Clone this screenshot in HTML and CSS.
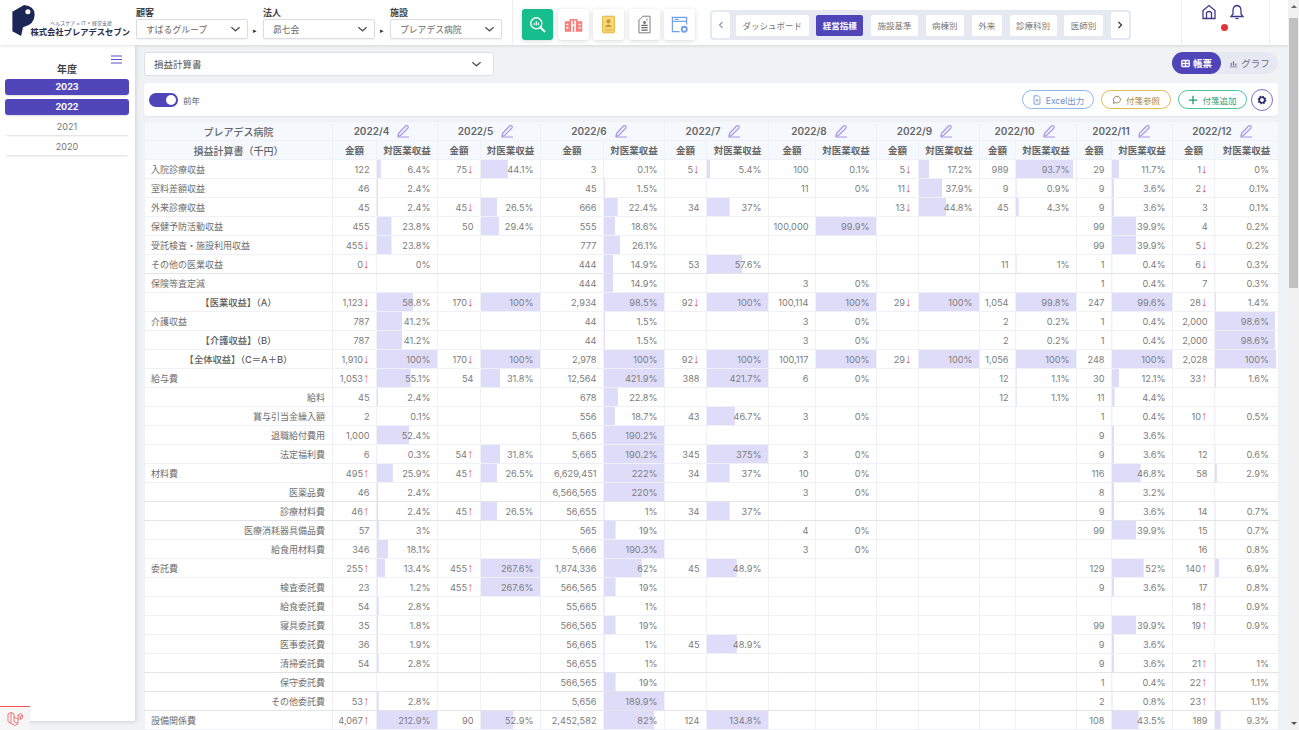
FILE: index.html
```html
<!DOCTYPE html>
<html lang="ja">
<head>
<meta charset="utf-8">
<title>損益計算書</title>
<link rel="stylesheet" href="styles.css">
</head>
<body>
<div class="page">
<div class="app">
<header class="topbar">
  <div class="brand">
    <svg class="brand-mark" viewBox="0 0 24 32"><path d="M0 7 L12 0 Q23 1 23 10 Q23 20 11 23 L9 32 L0 27 Z" fill="#1d2755"/><circle cx="16" cy="7" r="2.6" fill="#fff"/></svg>
    <div class="brand-text"><span class="brand-sub">ヘルスケア × IT × 経営支援</span><span class="brand-name">株式会社プレアデスセブン</span></div>
  </div>
  <div class="field"><span class="field-label">顧客</span><div class="select"><span>すばるグループ</span><svg class="chev" viewBox="0 0 12 8"><path d="M1.5 2 L6 6 L10.5 2"/></svg></div></div>
  <span class="sep">▸</span>
  <div class="field"><span class="field-label">法人</span><div class="select"><span>昴七会</span><svg class="chev" viewBox="0 0 12 8"><path d="M1.5 2 L6 6 L10.5 2"/></svg></div></div>
  <span class="sep">▸</span>
  <div class="field"><span class="field-label">施設</span><div class="select"><span>プレアデス病院</span><svg class="chev" viewBox="0 0 12 8"><path d="M1.5 2 L6 6 L10.5 2"/></svg></div></div>
  <div class="rule"></div>
  <nav class="appicons">
    <a class="appicon on"><svg viewBox="0 0 24 24" fill="none" stroke="#fff" stroke-width="1.8"><circle cx="10.5" cy="10.5" r="7"/><path d="M15.5 15.5 L21.5 21.5" stroke-width="2.4"/><path d="M8 13 V10 M10.5 13 V7.5 M13 13 V9.5" stroke-width="1.4"/></svg></a>
    <a class="appicon"><svg viewBox="0 0 24 24" fill="#f47f7f"><path d="M1 8 H7 V5 H17 V8 H23 V21 H1 Z"/><path d="M3 11 H5.5 V13 H3 Z M3 15 H5.5 V17 H3 Z M18.5 11 H21 V13 H18.5 Z M18.5 15 H21 V17 H18.5 Z M9 7 H11 V21 H9 Z M13 7 H15 V21 H13 Z M9 12 H15 V14 H9 Z" fill="#fff"/></svg></a>
    <a class="appicon"><svg viewBox="0 0 24 24"><rect x="4.5" y="1.5" width="15" height="21" rx="1" fill="#f6d97e" stroke="#e2b23a" stroke-width="1.2"/><circle cx="12" cy="8" r="2.6" fill="#c9962a"/><path d="M7.5 15 Q12 9 16.5 15 Z" fill="#c9962a"/><path d="M7 18 H17 M7 20 H17" stroke="#e2b23a"/></svg></a>
    <a class="appicon"><svg viewBox="0 0 24 24" fill="none" stroke="#777" stroke-width="1.2"><path d="M10 1.5 H19 V22.5 H5 V6.5 Z"/><path d="M8 13 H16 M8 16 H16 M8 19 H16" stroke-width="1.6" stroke="#666"/><circle cx="12" cy="9.5" r="1.4" fill="#666"/><path d="M15 4.5 V7" /></svg></a>
    <a class="appicon"><svg viewBox="0 0 24 24" fill="none" stroke="#6fa0ec" stroke-width="1.5"><path d="M21 12 V3 H3 V21 H12"/><path d="M3 8 H21" /><path d="M6 5.5 H11"/><circle cx="18" cy="18" r="3.2" stroke-width="2.4"/></svg></a>
  </nav>
  <div class="tabs">
    <button class="tab-arrow"><svg viewBox="0 0 8 12"><path d="M5.5 3 L2.5 6 L5.5 9" stroke="#999"/></svg></button>
    <div class="tab-strip">
      <a class="tab">ダッシュボード</a><a class="tab active">経営指標</a><a class="tab">施設基準</a><a class="tab">病棟別</a><a class="tab">外来</a><a class="tab">診療科別</a><a class="tab">医師別</a><a class="tab tab-next"></a>
    </div>
    <button class="tab-arrow"><svg viewBox="0 0 8 12"><path d="M2.5 3 L5.5 6 L2.5 9" stroke="#333"/></svg></button>
  </div>
  <div class="actions">
    <svg class="act-icon" viewBox="0 0 16 16" fill="none" stroke="#3d3a8c" stroke-width="1.3"><path d="M2 6.5 L8 1.5 L14 6.5 V14.5 H2 Z"/><path d="M5.5 14.5 V8.5 Q8 6.5 10.5 8.5 V14.5"/></svg>
    <svg class="act-icon" viewBox="0 0 16 16" fill="none" stroke="#3d3a8c" stroke-width="1.3"><path d="M8 1.5 Q12 2 12 6.5 V10 L14 12.5 H2 L4 10 V6.5 Q4 2 8 1.5 Z"/><path d="M6.5 14.5 H9.5"/></svg>
    <span class="alert-dot"></span>
  </div>
</header>

<div class="content">
  <aside class="sidebar">
    <svg class="menu" viewBox="0 0 12 10" stroke="#5a50c8" stroke-width="1"><path d="M0 1 H11 M0 4.500 H11 M0 8 H11"/></svg>
    <h2 class="side-title">年度</h2>
    <ul class="years">
      <li class="year sel">2023</li>
      <li class="year sel">2022</li>
      <li class="year">2021</li>
      <li class="year">2020</li>
    </ul>
  </aside>

  <main class="main">
    <div class="main-head">
      <div class="report-select"><span>損益計算書</span><svg class="chev" viewBox="0 0 12 8"><path d="M1.500 2 L6 6 L10.500 2"/></svg></div>
      <div class="view-switch">
        <span class="view on"><svg viewBox="0 0 12 12" fill="none" stroke="#fff" stroke-width="1.700"><rect x="1" y="2" width="10" height="8" rx="1"/><path d="M1 6 H11 M6 2 V10"/></svg>帳票</span>
        <span class="view"><svg viewBox="0 0 12 12" fill="none" stroke="#6b6b9a" stroke-width="1"><path d="M1 10.500 H11"/><path d="M3 9 V5 M6 9 V3 M9 9 V6" stroke-width="1.500"/></svg>グラフ</span>
      </div>
    </div>
    <div class="toolbar">
      <span class="switch"><span class="knob"></span></span>
      <span class="switch-label">前年</span>
      <div class="tools">
        <a class="tool blue"><svg viewBox="0 0 12 12" fill="none" stroke="currentColor"><path d="M2.500 1 H7.500 L9.500 3 V11 H2.500 Z"/><path d="M5 5 L7 8 M7 5 L5 8"/></svg>Excel出力</a>
        <a class="tool gold"><svg viewBox="0 0 12 12" fill="none" stroke="#8a7440"><path d="M6 1.500 A4.500 4 0 1 1 3.500 9 L1.800 10.500 L2.300 7.500 A4.500 4 0 0 1 6 1.500 Z"/></svg>付箋参照</a>
        <a class="tool green"><svg viewBox="0 0 12 12" fill="none" stroke="#1c9a70" stroke-width="1.500"><path d="M6 1 V11 M1 6 H11"/></svg>付箋追加</a>
        <a class="gear"><svg viewBox="0 0 12 12"><circle cx="6" cy="6" r="3.300" fill="none" stroke="#2b2a6b" stroke-width="2"/><circle cx="6" cy="6" r="4.500" fill="none" stroke="#2b2a6b" stroke-width="1.500" stroke-dasharray="1.800 1.730"/></svg></a>
      </div>
    </div>

    <table class="report">
      <colgroup><col><col><col><col><col><col><col><col><col><col><col><col><col><col><col><col><col><col><col></colgroup>
      <thead>
        <tr>
          <th>プレアデス病院</th>
          <th colspan="2">2022/4<svg class="pen" viewBox="0 0 14 14"><path d="M2.500 9.500 L9.500 2 Q11 1 12 2.200 Q12.500 3.500 11.500 4.500 L4.500 11.500 L2 12 Z M1.500 13 H13"/></svg></th>
          <th colspan="2">2022/5<svg class="pen" viewBox="0 0 14 14"><path d="M2.500 9.500 L9.500 2 Q11 1 12 2.200 Q12.500 3.500 11.500 4.500 L4.500 11.500 L2 12 Z M1.500 13 H13"/></svg></th>
          <th colspan="2">2022/6<svg class="pen" viewBox="0 0 14 14"><path d="M2.500 9.500 L9.500 2 Q11 1 12 2.200 Q12.500 3.500 11.500 4.500 L4.500 11.500 L2 12 Z M1.500 13 H13"/></svg></th>
          <th colspan="2">2022/7<svg class="pen" viewBox="0 0 14 14"><path d="M2.500 9.500 L9.500 2 Q11 1 12 2.200 Q12.500 3.500 11.500 4.500 L4.500 11.500 L2 12 Z M1.500 13 H13"/></svg></th>
          <th colspan="2">2022/8<svg class="pen" viewBox="0 0 14 14"><path d="M2.500 9.500 L9.500 2 Q11 1 12 2.200 Q12.500 3.500 11.500 4.500 L4.500 11.500 L2 12 Z M1.500 13 H13"/></svg></th>
          <th colspan="2">2022/9<svg class="pen" viewBox="0 0 14 14"><path d="M2.500 9.500 L9.500 2 Q11 1 12 2.200 Q12.500 3.500 11.500 4.500 L4.500 11.500 L2 12 Z M1.500 13 H13"/></svg></th>
          <th colspan="2">2022/10<svg class="pen" viewBox="0 0 14 14"><path d="M2.500 9.500 L9.500 2 Q11 1 12 2.200 Q12.500 3.500 11.500 4.500 L4.500 11.500 L2 12 Z M1.500 13 H13"/></svg></th>
          <th colspan="2">2022/11<svg class="pen" viewBox="0 0 14 14"><path d="M2.500 9.500 L9.500 2 Q11 1 12 2.200 Q12.500 3.500 11.500 4.500 L4.500 11.500 L2 12 Z M1.500 13 H13"/></svg></th>
          <th colspan="2">2022/12<svg class="pen" viewBox="0 0 14 14"><path d="M2.500 9.500 L9.500 2 Q11 1 12 2.200 Q12.500 3.500 11.500 4.500 L4.500 11.500 L2 12 Z M1.500 13 H13"/></svg></th>
        </tr>
        <tr>
          <th>損益計算書（千円）</th>
          <th>金額</th><th>対医業収益</th><th>金額</th><th>対医業収益</th><th>金額</th><th>対医業収益</th><th>金額</th><th>対医業収益</th><th>金額</th><th>対医業収益</th><th>金額</th><th>対医業収益</th><th>金額</th><th>対医業収益</th><th>金額</th><th>対医業収益</th><th>金額</th><th>対医業収益</th>
        </tr>
      </thead>
      <tbody>
<tr><td class="lb">入院診療収益</td><td>122</td><td class="p" style="--v:6.4">6.4%</td><td>75<b class="dn">↓</b></td><td class="p" style="--v:44.1">44.1%</td><td>3</td><td class="p" style="--v:0.1">0.1%</td><td>5<b class="dn">↓</b></td><td class="p" style="--v:5.4">5.4%</td><td>100</td><td class="p" style="--v:0.1">0.1%</td><td>5<b class="dn">↓</b></td><td class="p" style="--v:17.2">17.2%</td><td>989</td><td class="p" style="--v:93.7">93.7%</td><td>29</td><td class="p" style="--v:11.7">11.7%</td><td>1<b class="dn">↓</b></td><td class="p" style="--v:0">0%</td></tr>
<tr><td class="lb">室料差額収益</td><td>46</td><td class="p" style="--v:2.4">2.4%</td><td></td><td></td><td>45</td><td class="p" style="--v:1.5">1.5%</td><td></td><td></td><td>11</td><td class="p" style="--v:0">0%</td><td>11<b class="dn">↓</b></td><td class="p" style="--v:37.9">37.9%</td><td>9</td><td class="p" style="--v:0.9">0.9%</td><td>9</td><td class="p" style="--v:3.6">3.6%</td><td>2<b class="dn">↓</b></td><td class="p" style="--v:0.1">0.1%</td></tr>
<tr><td class="lb">外来診療収益</td><td>45</td><td class="p" style="--v:2.4">2.4%</td><td>45<b class="dn">↓</b></td><td class="p" style="--v:26.5">26.5%</td><td>666</td><td class="p" style="--v:22.4">22.4%</td><td>34</td><td class="p" style="--v:37">37%</td><td></td><td></td><td>13<b class="dn">↓</b></td><td class="p" style="--v:44.8">44.8%</td><td>45</td><td class="p" style="--v:4.3">4.3%</td><td>9</td><td class="p" style="--v:3.6">3.6%</td><td>3</td><td class="p" style="--v:0.1">0.1%</td></tr>
<tr><td class="lb">保健予防活動収益</td><td>455</td><td class="p" style="--v:23.8">23.8%</td><td>50</td><td class="p" style="--v:29.4">29.4%</td><td>555</td><td class="p" style="--v:18.6">18.6%</td><td></td><td></td><td>100,000</td><td class="p" style="--v:99.9">99.9%</td><td></td><td></td><td></td><td></td><td>99</td><td class="p" style="--v:39.9">39.9%</td><td>4</td><td class="p" style="--v:0.2">0.2%</td></tr>
<tr><td class="lb">受託検査・施設利用収益</td><td>455<b class="dn">↓</b></td><td class="p" style="--v:23.8">23.8%</td><td></td><td></td><td>777</td><td class="p" style="--v:26.1">26.1%</td><td></td><td></td><td></td><td></td><td></td><td></td><td></td><td></td><td>99</td><td class="p" style="--v:39.9">39.9%</td><td>5<b class="dn">↓</b></td><td class="p" style="--v:0.2">0.2%</td></tr>
<tr class="strong"><td class="lb">その他の医業収益</td><td>0<b class="dn">↓</b></td><td class="p" style="--v:0">0%</td><td></td><td></td><td>444</td><td class="p" style="--v:14.9">14.9%</td><td>53</td><td class="p" style="--v:57.6">57.6%</td><td></td><td></td><td></td><td></td><td>11</td><td class="p" style="--v:1">1%</td><td>1</td><td class="p" style="--v:0.4">0.4%</td><td>6<b class="dn">↓</b></td><td class="p" style="--v:0.3">0.3%</td></tr>
<tr><td class="lb">保険等査定減</td><td></td><td></td><td></td><td></td><td>444</td><td class="p" style="--v:14.9">14.9%</td><td></td><td></td><td>3</td><td class="p" style="--v:0">0%</td><td></td><td></td><td></td><td></td><td>1</td><td class="p" style="--v:0.4">0.4%</td><td>7</td><td class="p" style="--v:0.3">0.3%</td></tr>
<tr><td class="tot">【医業収益】（A）</td><td>1,123<b class="dn">↓</b></td><td class="p" style="--v:58.8">58.8%</td><td>170<b class="dn">↓</b></td><td class="p" style="--v:100">100%</td><td>2,934</td><td class="p" style="--v:98.5">98.5%</td><td>92<b class="dn">↓</b></td><td class="p" style="--v:100">100%</td><td>100,114</td><td class="p" style="--v:100">100%</td><td>29<b class="dn">↓</b></td><td class="p" style="--v:100">100%</td><td>1,054</td><td class="p" style="--v:99.8">99.8%</td><td>247</td><td class="p" style="--v:99.6">99.6%</td><td>28<b class="dn">↓</b></td><td class="p" style="--v:1.4">1.4%</td></tr>
<tr><td class="lb">介護収益</td><td>787</td><td class="p" style="--v:41.2">41.2%</td><td></td><td></td><td>44</td><td class="p" style="--v:1.5">1.5%</td><td></td><td></td><td>3</td><td class="p" style="--v:0">0%</td><td></td><td></td><td>2</td><td class="p" style="--v:0.2">0.2%</td><td>1</td><td class="p" style="--v:0.4">0.4%</td><td>2,000</td><td class="p" style="--v:98.6">98.6%</td></tr>
<tr><td class="tot">【介護収益】（B）</td><td>787</td><td class="p" style="--v:41.2">41.2%</td><td></td><td></td><td>44</td><td class="p" style="--v:1.5">1.5%</td><td></td><td></td><td>3</td><td class="p" style="--v:0">0%</td><td></td><td></td><td>2</td><td class="p" style="--v:0.2">0.2%</td><td>1</td><td class="p" style="--v:0.4">0.4%</td><td>2,000</td><td class="p" style="--v:98.6">98.6%</td></tr>
<tr><td class="tot">【全体収益】（C＝A＋B）</td><td>1,910<b class="dn">↓</b></td><td class="p" style="--v:100">100%</td><td>170<b class="dn">↓</b></td><td class="p" style="--v:100">100%</td><td>2,978</td><td class="p" style="--v:100">100%</td><td>92<b class="dn">↓</b></td><td class="p" style="--v:100">100%</td><td>100,117</td><td class="p" style="--v:100">100%</td><td>29<b class="dn">↓</b></td><td class="p" style="--v:100">100%</td><td>1,056</td><td class="p" style="--v:100">100%</td><td>248</td><td class="p" style="--v:100">100%</td><td>2,028</td><td class="p" style="--v:100">100%</td></tr>
<tr><td class="lb">給与費</td><td>1,053<b class="up">↑</b></td><td class="p" style="--v:55.1">55.1%</td><td>54</td><td class="p" style="--v:31.8">31.8%</td><td>12,564</td><td class="p" style="--v:421.9">421.9%</td><td>388</td><td class="p" style="--v:421.7">421.7%</td><td>6</td><td class="p" style="--v:0">0%</td><td></td><td></td><td>12</td><td class="p" style="--v:1.1">1.1%</td><td>30</td><td class="p" style="--v:12.1">12.1%</td><td>33<b class="up">↑</b></td><td class="p" style="--v:1.6">1.6%</td></tr>
<tr><td class="sub">給料</td><td>45</td><td class="p" style="--v:2.4">2.4%</td><td></td><td></td><td>678</td><td class="p" style="--v:22.8">22.8%</td><td></td><td></td><td></td><td></td><td></td><td></td><td>12</td><td class="p" style="--v:1.1">1.1%</td><td>11</td><td class="p" style="--v:4.4">4.4%</td><td></td><td></td></tr>
<tr><td class="sub">賞与引当金繰入額</td><td>2</td><td class="p" style="--v:0.1">0.1%</td><td></td><td></td><td>556</td><td class="p" style="--v:18.7">18.7%</td><td>43</td><td class="p" style="--v:46.7">46.7%</td><td>3</td><td class="p" style="--v:0">0%</td><td></td><td></td><td></td><td></td><td>1</td><td class="p" style="--v:0.4">0.4%</td><td>10<b class="up">↑</b></td><td class="p" style="--v:0.5">0.5%</td></tr>
<tr><td class="sub">退職給付費用</td><td>1,000</td><td class="p" style="--v:52.4">52.4%</td><td></td><td></td><td>5,665</td><td class="p" style="--v:190.2">190.2%</td><td></td><td></td><td></td><td></td><td></td><td></td><td></td><td></td><td>9</td><td class="p" style="--v:3.6">3.6%</td><td></td><td></td></tr>
<tr><td class="sub">法定福利費</td><td>6</td><td class="p" style="--v:0.3">0.3%</td><td>54<b class="up">↑</b></td><td class="p" style="--v:31.8">31.8%</td><td>5,665</td><td class="p" style="--v:190.2">190.2%</td><td>345</td><td class="p" style="--v:375">375%</td><td>3</td><td class="p" style="--v:0">0%</td><td></td><td></td><td></td><td></td><td>9</td><td class="p" style="--v:3.6">3.6%</td><td>12</td><td class="p" style="--v:0.6">0.6%</td></tr>
<tr><td class="lb">材料費</td><td>495<b class="up">↑</b></td><td class="p" style="--v:25.9">25.9%</td><td>45<b class="up">↑</b></td><td class="p" style="--v:26.5">26.5%</td><td>6,629,451</td><td class="p" style="--v:222">222%</td><td>34</td><td class="p" style="--v:37">37%</td><td>10</td><td class="p" style="--v:0">0%</td><td></td><td></td><td></td><td></td><td>116</td><td class="p" style="--v:46.8">46.8%</td><td>58</td><td class="p" style="--v:2.9">2.9%</td></tr>
<tr class="strong"><td class="sub">医薬品費</td><td>46</td><td class="p" style="--v:2.4">2.4%</td><td></td><td></td><td>6,566,565</td><td class="p" style="--v:220">220%</td><td></td><td></td><td>3</td><td class="p" style="--v:0">0%</td><td></td><td></td><td></td><td></td><td>8</td><td class="p" style="--v:3.2">3.2%</td><td></td><td></td></tr>
<tr class="strong"><td class="sub">診療材料費</td><td>46<b class="up">↑</b></td><td class="p" style="--v:2.4">2.4%</td><td>45<b class="up">↑</b></td><td class="p" style="--v:26.5">26.5%</td><td>56,655</td><td class="p" style="--v:1">1%</td><td>34</td><td class="p" style="--v:37">37%</td><td></td><td></td><td></td><td></td><td></td><td></td><td>9</td><td class="p" style="--v:3.6">3.6%</td><td>14</td><td class="p" style="--v:0.7">0.7%</td></tr>
<tr><td class="sub">医療消耗器具備品費</td><td>57</td><td class="p" style="--v:3">3%</td><td></td><td></td><td>565</td><td class="p" style="--v:19">19%</td><td></td><td></td><td>4</td><td class="p" style="--v:0">0%</td><td></td><td></td><td></td><td></td><td>99</td><td class="p" style="--v:39.9">39.9%</td><td>15</td><td class="p" style="--v:0.7">0.7%</td></tr>
<tr><td class="sub">給食用材料費</td><td>346</td><td class="p" style="--v:18.1">18.1%</td><td></td><td></td><td>5,666</td><td class="p" style="--v:190.3">190.3%</td><td></td><td></td><td>3</td><td class="p" style="--v:0">0%</td><td></td><td></td><td></td><td></td><td></td><td></td><td>16</td><td class="p" style="--v:0.8">0.8%</td></tr>
<tr><td class="lb">委託費</td><td>255<b class="up">↑</b></td><td class="p" style="--v:13.4">13.4%</td><td>455<b class="up">↑</b></td><td class="p" style="--v:267.6">267.6%</td><td>1,874,336</td><td class="p" style="--v:62">62%</td><td>45</td><td class="p" style="--v:48.9">48.9%</td><td></td><td></td><td></td><td></td><td></td><td></td><td>129</td><td class="p" style="--v:52">52%</td><td>140<b class="up">↑</b></td><td class="p" style="--v:6.9">6.9%</td></tr>
<tr><td class="sub">検査委託費</td><td>23</td><td class="p" style="--v:1.2">1.2%</td><td>455<b class="up">↑</b></td><td class="p" style="--v:267.6">267.6%</td><td>566,565</td><td class="p" style="--v:19">19%</td><td></td><td></td><td></td><td></td><td></td><td></td><td></td><td></td><td>9</td><td class="p" style="--v:3.6">3.6%</td><td>17</td><td class="p" style="--v:0.8">0.8%</td></tr>
<tr><td class="sub">給食委託費</td><td>54</td><td class="p" style="--v:2.8">2.8%</td><td></td><td></td><td>55,665</td><td class="p" style="--v:1">1%</td><td></td><td></td><td></td><td></td><td></td><td></td><td></td><td></td><td></td><td></td><td>18<b class="up">↑</b></td><td class="p" style="--v:0.9">0.9%</td></tr>
<tr><td class="sub">寝具委託費</td><td>35</td><td class="p" style="--v:1.8">1.8%</td><td></td><td></td><td>566,565</td><td class="p" style="--v:19">19%</td><td></td><td></td><td></td><td></td><td></td><td></td><td></td><td></td><td>99</td><td class="p" style="--v:39.9">39.9%</td><td>19<b class="up">↑</b></td><td class="p" style="--v:0.9">0.9%</td></tr>
<tr><td class="sub">医事委託費</td><td>36</td><td class="p" style="--v:1.9">1.9%</td><td></td><td></td><td>56,665</td><td class="p" style="--v:1">1%</td><td>45</td><td class="p" style="--v:48.9">48.9%</td><td></td><td></td><td></td><td></td><td></td><td></td><td>9</td><td class="p" style="--v:3.6">3.6%</td><td></td><td></td></tr>
<tr class="strong"><td class="sub">清掃委託費</td><td>54</td><td class="p" style="--v:2.8">2.8%</td><td></td><td></td><td>56,655</td><td class="p" style="--v:1">1%</td><td></td><td></td><td></td><td></td><td></td><td></td><td></td><td></td><td>9</td><td class="p" style="--v:3.6">3.6%</td><td>21<b class="up">↑</b></td><td class="p" style="--v:1">1%</td></tr>
<tr class="strong"><td class="sub">保守委託費</td><td></td><td></td><td></td><td></td><td>566,565</td><td class="p" style="--v:19">19%</td><td></td><td></td><td></td><td></td><td></td><td></td><td></td><td></td><td>1</td><td class="p" style="--v:0.4">0.4%</td><td>22<b class="up">↑</b></td><td class="p" style="--v:1.1">1.1%</td></tr>
<tr class="strong"><td class="sub">その他委託費</td><td>53<b class="up">↑</b></td><td class="p" style="--v:2.8">2.8%</td><td></td><td></td><td>5,656</td><td class="p" style="--v:189.9">189.9%</td><td></td><td></td><td></td><td></td><td></td><td></td><td></td><td></td><td>2</td><td class="p" style="--v:0.8">0.8%</td><td>23<b class="up">↑</b></td><td class="p" style="--v:1.1">1.1%</td></tr>
<tr><td class="lb">設備関係費</td><td>4,067<b class="up">↑</b></td><td class="p" style="--v:212.9">212.9%</td><td>90</td><td class="p" style="--v:52.9">52.9%</td><td>2,452,582</td><td class="p" style="--v:82">82%</td><td>124</td><td class="p" style="--v:134.8">134.8%</td><td></td><td></td><td></td><td></td><td></td><td></td><td>108</td><td class="p" style="--v:43.5">43.5%</td><td>189</td><td class="p" style="--v:9.3">9.3%</td></tr>
      </tbody>
    </table>
  </main>
</div>
<a class="debugbar"><svg viewBox="0 0 16 16" fill="none" stroke="#ee6a6a" stroke-width="0.9"><path d="M1 3 L4 1.500 L7 3 V10.500 L11 12.500 L8 14.500 L4 12.500 L1 10.500 Z M4 1.500 V12.500 M7 6 L11 8 V12.500"/><path d="M11 4 L13.500 2.500 L15.500 4 V7 L13 8.500 L11 7 Z M11 4 L13.500 5.500 L15.500 4 M13.500 5.500 V8"/></svg></a>
</div>
<div class="scrollbar"><span class="sb-up"></span><span class="sb-thumb"></span><span class="sb-down"></span></div>
</div>
</body>
</html>
```
FILE: styles.css
```css
* { box-sizing: border-box; }
html, body { margin: 0; padding: 0; height: 100%; }
body { font-family: Inter, "Noto Sans CJK JP", sans-serif; color: #555; background: #f1f2f3; }
.page { display: flex; width: 1299px; height: 730px; overflow: hidden; }
.app { position: relative; width: 1288px; height: 730px; overflow: hidden; }

/* top bar */
.topbar { display: flex; align-items: flex-start; height: 45px; background: #fff; box-shadow: 0 1px 3px rgba(0,0,0,.12); padding-left: 12px; position: relative; z-index: 2; }
.brand { display: flex; width: 124px; height: 45px; padding-top: 5px; }
.brand-mark { width: 24px; height: 31px; flex: none; margin-right: -6px; }
.brand-text { display: flex; flex-direction: column; align-items: flex-end; width: 100px; padding-top: 15px; }
.brand-sub { font-size: 5px; line-height: 7px; color: #667; padding-right: 18px; white-space: nowrap; }
.brand-name { font-size: 8.3px; line-height: 11px; font-weight: 700; color: #2a2a4a; white-space: nowrap; }
.field { display: flex; flex-direction: column; width: 112px; padding-top: 6px; }
.field-label { font-size: 9px; line-height: 13px; font-weight: 700; color: #444; }
.select { display: flex; align-items: center; justify-content: space-between; height: 20px; background: #fff; border: 1px solid #dcdde2; border-radius: 2px; padding: 0 6px 0 9px; font-size: 8.8px; color: #666; box-shadow: 0 1px 2px rgba(0,0,0,.06); }
.chev { width: 11px; height: 8px; fill: none; stroke: #555; stroke-width: 1.4; flex: none; }
.sep { width: 15px; padding: 26px 0 0 5px; font-size: 7px; line-height: 10px; color: #333; }
.rule { width: 1px; height: 44px; margin-left: 10px; background: #eceff2; }
.appicons { display: flex; gap: 4.5px; margin: 9px 0 0 9px; }
.appicon { display: flex; align-items: center; justify-content: center; width: 31px; height: 31px; background: #fff; border-radius: 3px; box-shadow: 0 1px 4px rgba(0,0,0,.16); }
.appicon svg { width: 19px; height: 19px; }
.appicon.on { background: #17be8d; }
.tabs { display: flex; align-items: center; gap: 6px; width: 421px; height: 30px; margin: 10px 0 0 15px; padding: 0 2px; background: #e7e9f2; border-radius: 4px; }
.tab-arrow { display: flex; align-items: center; justify-content: center; flex: none; width: 18px; height: 26px; padding: 0; border: 0; background: #fff; border-radius: 3px; }
.tab-arrow svg { width: 8px; height: 12px; fill: none; stroke-width: 1.2; }
.tab-strip { display: flex; flex: none; align-items: center; gap: 7.7px; width: 373px; height: 21px; overflow: hidden; }
.tab { flex: none; display: flex; align-items: center; height: 21px; padding: 0 6.5px; background: #fff; border-radius: 2px; font-size: 8.5px; color: #777; white-space: nowrap; }
.tab.active { background: #4f45b9; color: #fff; font-weight: 700; }
.tab-next { width: 40px; }
.tab-strip + .tab-arrow { margin-left: -4px; }
.actions { position: relative; display: flex; gap: 12px; width: 89px; height: 44px; margin-left: 50px; padding: 4px 0 0 19px; border-left: 1px solid #eceff2; border-right: 1px solid #eceff2; }
.act-icon { width: 16px; height: 16px; }
.alert-dot { position: absolute; left: 39px; top: 24px; width: 7px; height: 7px; border-radius: 50%; background: #e5343d; }

/* layout below header */
.content { display: flex; height: 685px; }
.sidebar { position: relative; flex: none; width: 135px; height: 676px; background: #fff; box-shadow: 1px 1px 4px rgba(0,0,0,.14); padding: 0 6px 0 5px; }
.menu { position: absolute; right: 12px; top: 10px; width: 12px; height: 10px; }
.side-title { margin: 17px 0 0; font-size: 10px; line-height: 14px; font-weight: 700; color: #444; text-align: center; }
.years { list-style: none; margin: 3px 0 0; padding: 0; display: flex; flex-direction: column; gap: 4px; }
.year { height: 16px; border-radius: 3px; font-size: 9px; line-height: 15px; text-align: center; color: #777; box-shadow: 0 2px 2px -1px rgba(0,0,0,.14); }
.year.sel { background: #5046ba; color: #fff; font-weight: 700; }

.main { flex: 1; min-width: 0; padding: 7px 10px 0 9px; }
.main-head { display: flex; justify-content: space-between; align-items: flex-start; height: 24px; }
.report-select { display: flex; align-items: center; justify-content: space-between; width: 350px; height: 24px; padding: 0 11px 0 9px; background: #fff; border: 1px solid #dddfe3; border-radius: 3px; font-size: 9.5px; color: #555; }
.view-switch { display: flex; width: 106px; height: 22px; background: #e7e9f2; border-radius: 11px; font-size: 9.5px; color: #6b6b8a; }
.view { display: flex; align-items: center; justify-content: center; gap: 3px; width: 57px; }
.view svg { width: 9px; height: 9px; }
.view.on { width: 49px; background: #4f45b9; border-radius: 11px; color: #fff; font-weight: 700; }
.toolbar { display: flex; align-items: center; height: 33px; margin-top: 7px; padding: 0 5px; background: #fff; border-radius: 4px; box-shadow: 0 1px 2px rgba(0,0,0,.05); }
.switch { display: flex; justify-content: flex-end; align-items: center; width: 29px; height: 14px; padding-right: 2px; background: #4f45b9; border-radius: 7px; }
.knob { width: 10px; height: 10px; background: #fff; border-radius: 50%; }
.switch-label { margin-left: 5px; font-size: 8.5px; color: #666; }
.tools { display: flex; align-items: center; gap: 7px; margin-left: auto; }
.tool { display: flex; align-items: center; justify-content: center; gap: 4px; height: 19px; background: #fff; border: 1px solid; border-radius: 10px; font-size: 8.5px; white-space: nowrap; }
.tool svg { width: 10px; height: 10px; }
.tool.blue { width: 72px; border-color: #8fb6ee; color: #6a8fd0; }
.tool.gold { width: 70px; border-color: #e2bb55; color: #a88a3c; }
.tool.green { width: 69px; border-color: #49c79c; color: #2f9f7c; margin-right: -3px; }
.gear { display: flex; align-items: center; justify-content: center; width: 22px; height: 22px; background: #fff; border: 1px solid #7a70d0; border-radius: 50%; }
.gear svg { width: 10px; height: 10px; }

/* report table */
.report { table-layout: fixed; width: 1134px; margin-top: 5px; border-collapse: collapse; background: #fff; font-size: 9.2px; color: #7c7c7c; }
.report col:nth-child(1) { width: 188px; }
.report col:nth-child(2) { width: 44px; }
.report col:nth-child(3) { width: 61px; }
.report col:nth-child(4) { width: 43px; }
.report col:nth-child(5) { width: 60px; }
.report col:nth-child(6) { width: 63px; }
.report col:nth-child(7) { width: 61px; }
.report col:nth-child(8) { width: 42px; }
.report col:nth-child(9) { width: 62px; }
.report col:nth-child(10) { width: 47px; }
.report col:nth-child(11) { width: 61px; }
.report col:nth-child(12) { width: 42px; }
.report col:nth-child(13) { width: 61px; }
.report col:nth-child(14) { width: 36px; }
.report col:nth-child(15) { width: 61px; }
.report col:nth-child(16) { width: 35px; }
.report col:nth-child(17) { width: 61px; }
.report col:nth-child(18) { width: 42px; }
.report col:nth-child(19) { width: 64px; }
.report th { height: 19px; padding: 0; background: #f5f9fe; border: 1px solid #edf1f8; font-size: 9.5px; font-weight: 600; color: #666; text-align: center; white-space: nowrap; }
.report thead tr:first-child th { font-size: 10px; font-weight: 600; padding-right: 6px; }
.report thead tr:first-child th:first-child { font-weight: 500; padding-right: 0; }
.report thead tr:last-child th:first-child { font-size: 10px; font-weight: 500; }
.report td { height: 19.03px; padding: 0 6.5px 0 0; border: 1px solid #f0f1f6; text-align: right; white-space: nowrap; }
.report tr.strong td { border-bottom-color: #e2e4ea; }
.report td.lb { padding-left: 6px; text-align: left; font-size: 9px; color: #6e6e6e; }
.report td.sub { padding-right: 7px; font-size: 9px; color: #6e6e6e; }
.report td.tot { padding-right: 0; text-align: center; font-size: 9.3px; font-weight: 500; color: #5c5c5c; }
.report td.p { background-image: linear-gradient(#dfdcfa, #dfdcfa); background-repeat: no-repeat; background-position: left top; background-size: min(calc(var(--v) * .61px), 61px) 100%; }
.report td:last-child { padding-right: 9px; }
.dn, .up { margin-left: 0; font-family: "Liberation Sans", sans-serif; font-weight: 700; font-size: 13px; line-height: 0; }
.dn { color: #e2453f; }
.up { color: #ea5a2e; }
.pen { width: 14px; height: 14px; margin-left: 7px; vertical-align: -3px; fill: none; stroke: #a596e6; stroke-width: 1.2; }

/* debug tab */
.debugbar { position: absolute; left: 0; bottom: 0; display: flex; align-items: center; justify-content: center; width: 30px; height: 24px; background: #f6f6f6; border-top: 1px solid #f4555b; }
.debugbar svg { width: 16px; height: 16px; }

/* drawn scrollbar */
.scrollbar { display: flex; flex-direction: column; align-items: center; width: 11px; height: 730px; background: #f1f1f1; }
.sb-up { width: 0; height: 0; margin-top: 5px; border-left: 3px solid transparent; border-right: 3px solid transparent; border-bottom: 3px solid #666; }
.sb-thumb { width: 9px; height: 270px; margin-top: 10px; background: #c1c1c1; }
.sb-down { width: 0; height: 0; margin-top: auto; margin-bottom: 5px; border-left: 3px solid transparent; border-right: 3px solid transparent; border-top: 3px solid #555; }
```
